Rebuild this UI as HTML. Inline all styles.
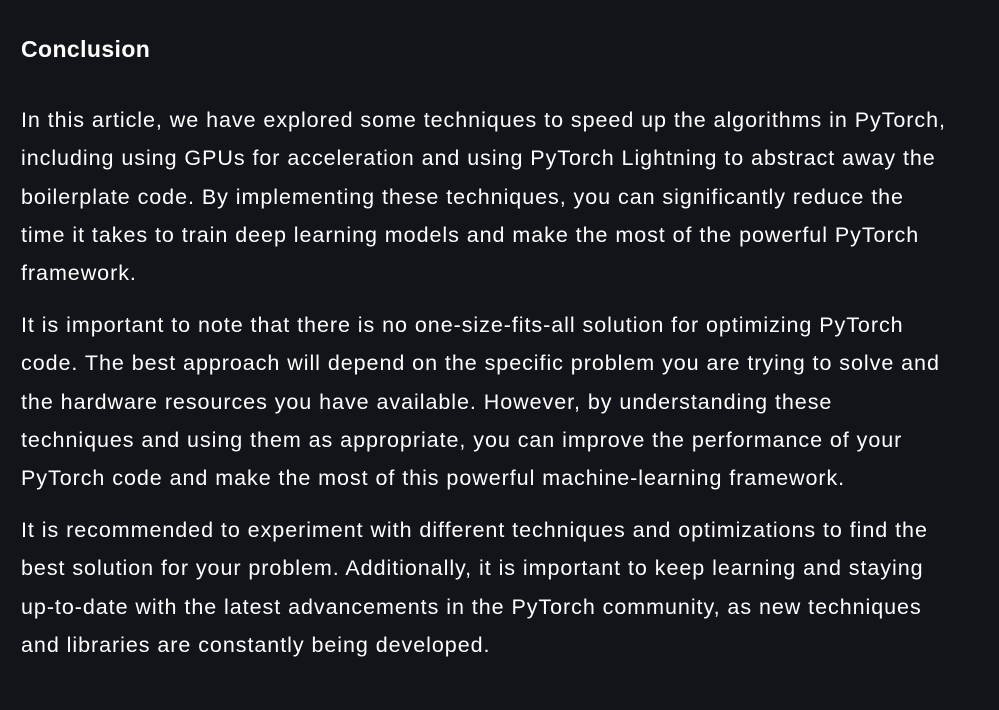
<!DOCTYPE html>
<html><head><meta charset="utf-8"><style>
html,body{margin:0;padding:0;background:#131419;width:999px;height:710px;overflow:hidden}
body{font-family:"Liberation Sans",sans-serif;color:#fff}
h2{position:absolute;left:21px;top:34px;margin:0;font-size:23px;font-weight:bold;line-height:30px;letter-spacing:0.4px}
.p{position:absolute;left:21px;margin:0;font-size:21.5px;letter-spacing:0.95px;line-height:38.3px;white-space:nowrap}
</style></head><body>
<h2>Conclusion</h2>
<p class="p" style="top:101px">In this article, we have explored some techniques to speed up the algorithms in PyTorch,<br>including using GPUs for acceleration and using PyTorch Lightning to abstract away the<br>boilerplate code. By implementing these techniques, you can significantly reduce the<br>time it takes to train deep learning models and make the most of the powerful PyTorch<br>framework.</p>
<p class="p" style="top:306px">It is important to note that there is no one-size-fits-all solution for optimizing PyTorch<br>code. The best approach will depend on the specific problem you are trying to solve and<br>the hardware resources you have available. However, by understanding these<br>techniques and using them as appropriate, you can improve the performance of your<br>PyTorch code and make the most of this powerful machine-learning framework.</p>
<p class="p" style="top:511px">It is recommended to experiment with different techniques and optimizations to find the<br>best solution for your problem. Additionally, it is important to keep learning and staying<br>up-to-date with the latest advancements in the PyTorch community, as new techniques<br>and libraries are constantly being developed.</p>
</body></html>
